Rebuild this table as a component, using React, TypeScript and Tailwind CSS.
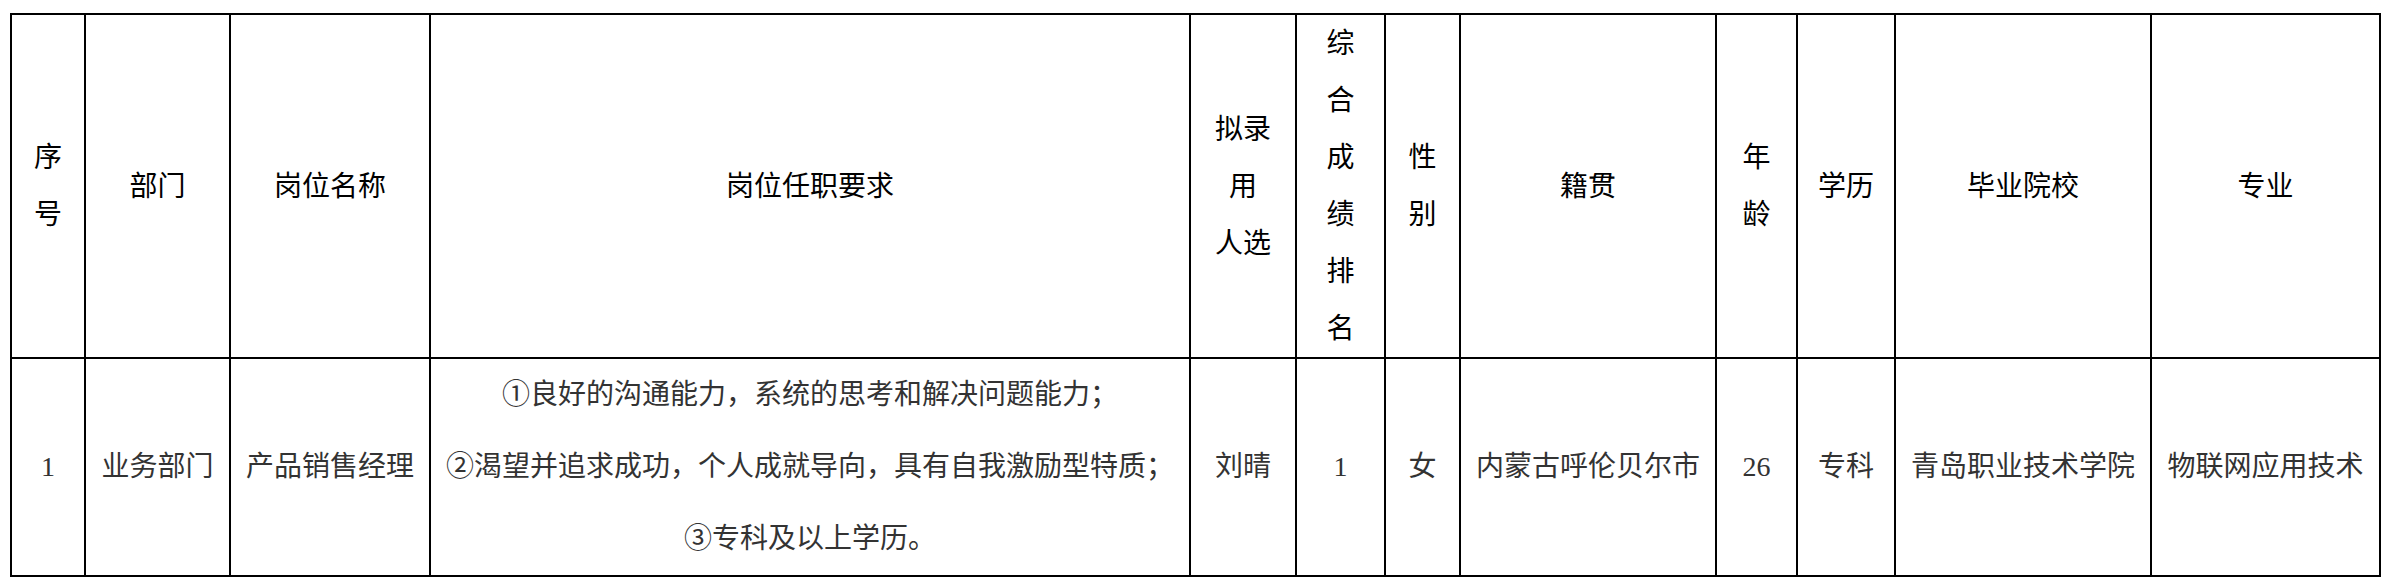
import React from "react";

const headers: { label: string[]; width: number }[] = [
  { label: ["序", "号"], width: 74 },
  { label: ["部门"], width: 145 },
  { label: ["岗位名称"], width: 200 },
  { label: ["岗位任职要求"], width: 760 },
  { label: ["拟录", "用", "人选"], width: 106 },
  { label: ["综", "合", "成", "绩", "排", "名"], width: 89 },
  { label: ["性", "别"], width: 75 },
  { label: ["籍贯"], width: 256 },
  { label: ["年", "龄"], width: 81 },
  { label: ["学历"], width: 98 },
  { label: ["毕业院校"], width: 256 },
  { label: ["专业"], width: 229 },
];

const requirements = [
  "①良好的沟通能力，系统的思考和解决问题能力；",
  "②渴望并追求成功，个人成就导向，具有自我激励型特质；",
  "③专科及以上学历。",
];

const App = () => {
  return (
    <div className="min-h-screen bg-white pl-[10px] pt-[13px] font-['Liberation_Serif','Noto_Sans_CJK_SC',serif] text-[28px] text-black">
      <table className="w-[2371px] table-fixed border-collapse border-2 border-black">
        <colgroup>
          {headers.map((h, i) => (
            <col key={i} style={{ width: h.width }} />
          ))}
        </colgroup>
        <thead>
          <tr className="h-[343px]">
            {headers.map((h, i) => (
              <th
                key={i}
                className="border-2 border-black p-0 text-center align-middle font-normal leading-[57px] text-black"
              >
                {h.label.map((line, j) => (
                  <div key={j} className="whitespace-nowrap">
                    {line}
                  </div>
                ))}
              </th>
            ))}
          </tr>
        </thead>
        <tbody>
          <tr className="h-[215px] text-[#333]">
            <td className="border-2 border-black p-0 text-center align-middle">1</td>
            <td className="border-2 border-black p-0 text-center align-middle whitespace-nowrap">业务部门</td>
            <td className="border-2 border-black p-0 text-center align-middle whitespace-nowrap">产品销售经理</td>
            <td className="border-2 border-black p-0 text-center align-middle leading-[72px]">
              {requirements.map((r, i) => (
                <div key={i} className="whitespace-nowrap">
                  {r}
                </div>
              ))}
            </td>
            <td className="border-2 border-black p-0 text-center align-middle">刘晴</td>
            <td className="border-2 border-black p-0 text-center align-middle">1</td>
            <td className="border-2 border-black p-0 text-center align-middle">女</td>
            <td className="border-2 border-black p-0 text-center align-middle whitespace-nowrap">内蒙古呼伦贝尔市</td>
            <td className="border-2 border-black p-0 text-center align-middle">26</td>
            <td className="border-2 border-black p-0 text-center align-middle">专科</td>
            <td className="border-2 border-black p-0 text-center align-middle whitespace-nowrap">青岛职业技术学院</td>
            <td className="border-2 border-black p-0 text-center align-middle whitespace-nowrap">物联网应用技术</td>
          </tr>
        </tbody>
      </table>
    </div>
  );
};

export default App;
